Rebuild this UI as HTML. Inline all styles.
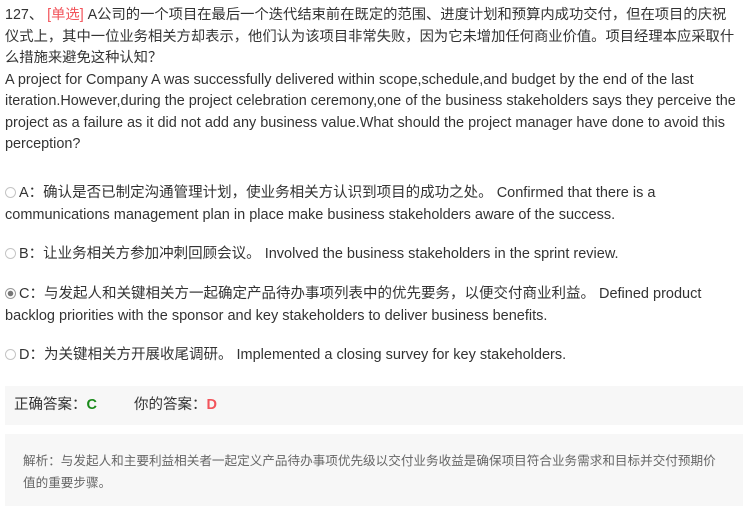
<!DOCTYPE html>
<html><head><meta charset="utf-8"><style>
body{margin:0;background:#fff;font-family:"Liberation Sans","Noto Sans CJK SC",sans-serif;color:#333;font-size:14.5px;}
.q{position:absolute;left:5px;top:5px;width:800px;line-height:21.5px;white-space:nowrap;font-size:14.3px;}
.q .e{font-size:14.45px;line-height:21.5px;}
.red{color:#f2545b;}
.opt{position:absolute;left:5px;width:800px;line-height:21.5px;white-space:nowrap;}
.r{display:inline-block;width:11px;height:11px;border:1px solid #c4c4c4;border-radius:50%;vertical-align:-1px;margin-right:3px;background:#fff;box-sizing:border-box;}
.r.on{border-color:#999;background:radial-gradient(circle,#777 0 2.5px,#fff 3px);}
.ans{position:absolute;left:5px;top:386px;width:738px;height:39px;background:#f7f7f7;line-height:39px;}
.ana{position:absolute;left:5px;top:434px;width:738px;height:72px;background:#f7f7f7;font-size:12.6px;color:#666;line-height:22px;white-space:nowrap;overflow:hidden;}
</style></head><body>
<div class="q">127、 <span class="red">[单选]</span> A公司的一个项目在最后一个迭代结束前在既定的范围、进度计划和预算内成功交付，但在项目的庆祝<br>仪式上，其中一位业务相关方却表示，他们认为该项目非常失败，因为它未增加任何商业价值。项目经理本应采取什<br>么措施来避免这种认知？<br><span class="e">A project for Company A was successfully delivered within scope,schedule,and budget by the end of the last<br>iteration.However,during the project celebration ceremony,one of the business stakeholders says they perceive the<br>project as a failure as it did not add any business value.What should the project manager have done to avoid this<br>perception?</span></div>
<div class="opt" style="top:183px"><span class="r"></span>A：确认是否已制定沟通管理计划，使业务相关方认识到项目的成功之处。 Confirmed that there is a<br>communications management plan in place make business stakeholders aware of the success.</div>
<div class="opt" style="top:244px"><span class="r"></span>B：让业务相关方参加冲刺回顾会议。 Involved the business stakeholders in the sprint review.</div>
<div class="opt" style="top:284px"><span class="r on"></span>C：与发起人和关键相关方一起确定产品待办事项列表中的优先要务，以便交付商业利益。 Defined product<br>backlog priorities with the sponsor and key stakeholders to deliver business benefits.</div>
<div class="opt" style="top:345px"><span class="r"></span>D：为关键相关方开展收尾调研。 Implemented a closing survey for key stakeholders.</div>
<div class="ans"><span style="margin-left:9px">正确答案：<b style="color:#1a8a1a">C</b></span><span style="margin-left:37px">你的答案：<b style="color:#f2545b">D</b></span></div>
<div class="ana"><div style="padding:16px 18px 0 18px">解析：与发起人和主要利益相关者一起定义产品待办事项优先级以交付业务收益是确保项目符合业务需求和目标并交付预期价<br>值的重要步骤。</div></div>
</body></html>
